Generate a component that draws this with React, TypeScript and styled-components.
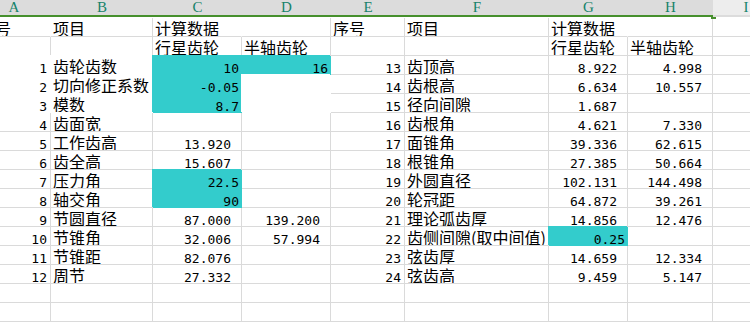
import React from "react";
import styled, { createGlobalStyle } from "styled-components";

const GlobalStyle = createGlobalStyle`
  html, body {
    margin: 0;
    padding: 0;
    background: #ffffff;
  }
  body {
    font-family: "Noto Sans CJK SC", sans-serif;
    color: #000000;
  }
`;

const GRID = "#dadada";
const TEAL = "#33cccc";
const COLS = [74, 102, 89, 89, 74, 144, 79, 85, 66];
const LETTERS = ["A", "B", "C", "D", "E", "F", "G", "H", "I"];

type Fill = "teal" | "white";

const fillColor = (f?: Fill) => (f === "teal" ? TEAL : "#ffffff");

const Viewport = styled.div`
  width: 750px;
  height: 322px;
  overflow: hidden;
  background: #ffffff;
`;

const Sheet = styled.div`
  display: grid;
  grid-template-columns: ${COLS.map((w) => w + "px").join(" ")};
  grid-auto-rows: auto;
  margin-left: -23px;
  width: max-content;
`;

const ColHead = styled.div<{ $active: boolean; $handle?: boolean }>`
  position: relative;
  height: 17px;
  box-sizing: border-box;
  margin-bottom: 1px;
  background: ${(p) => (p.$active ? "#dcdcdc" : "#ededed")};
  border-bottom: 2px solid ${(p) => (p.$active ? "#46902d" : "#dcdcdc")};
  font-family: "Liberation Serif", serif;
  font-size: 15px;
  line-height: 15px;
  color: #16836a;
  text-align: center;

  ${(p) =>
    p.$handle &&
    `
    &::after {
      content: "";
      position: absolute;
      right: -3px;
      bottom: -4px;
      width: 5px;
      height: 4px;
      background: #46902d;
    }
  `}
`;

const Cell = styled.div<{
  $fill?: Fill;
  $open?: boolean;
  $right?: boolean;
  $pr?: number;
}>`
  height: 19px;
  box-sizing: border-box;
  padding: 1px ${(p) => p.$pr ?? 2}px 0 2px;
  background: ${(p) => fillColor(p.$fill)};
  border-right: 1px solid
    ${(p) => (p.$fill ? fillColor(p.$fill) : p.$open ? "#ffffff" : GRID)};
  border-bottom: 1px solid ${(p) => (p.$fill ? fillColor(p.$fill) : GRID)};
  box-shadow: ${(p) =>
    p.$fill ? `-1px -1px 0 0 ${fillColor(p.$fill)}` : "none"};
  font-size: 16px;
  line-height: 18px;
  white-space: nowrap;
  overflow: hidden;
  text-align: ${(p) => (p.$right ? "right" : "left")};
`;

const Num = styled.span`
  font-family: "DejaVu Sans Mono", monospace;
  font-size: 13px;
  line-height: 1;
`;

type LeftRow = {
  n: number;
  name: string;
  c: string;
  d: string;
  cFill?: Fill;
  dFill?: Fill;
  abFill?: Fill;
};

type RightRow = {
  n: number;
  name: string;
  g: string;
  h: string;
  gFill?: Fill;
};

const left: LeftRow[] = [
  { n: 1, name: "齿轮齿数", c: "10", d: "16", cFill: "teal", dFill: "teal", abFill: "white" },
  { n: 2, name: "切向修正系数", c: "-0.05", d: "", cFill: "teal", dFill: "white", abFill: "white" },
  { n: 3, name: "模数", c: "8.7", d: "", cFill: "teal", dFill: "white", abFill: "white" },
  { n: 4, name: "齿面宽", c: "", d: "" },
  { n: 5, name: "工作齿高", c: "13.920", d: "" },
  { n: 6, name: "齿全高", c: "15.607", d: "" },
  { n: 7, name: "压力角", c: "22.5", d: "", cFill: "teal" },
  { n: 8, name: "轴交角", c: "90", d: "", cFill: "teal" },
  { n: 9, name: "节圆直径", c: "87.000", d: "139.200" },
  { n: 10, name: "节锥角", c: "32.006", d: "57.994" },
  { n: 11, name: "节锥距", c: "82.076", d: "" },
  { n: 12, name: "周节", c: "27.332", d: "" },
];

const right: RightRow[] = [
  { n: 13, name: "齿顶高", g: "8.922", h: "4.998" },
  { n: 14, name: "齿根高", g: "6.634", h: "10.557" },
  { n: 15, name: "径向间隙", g: "1.687", h: "" },
  { n: 16, name: "齿根角", g: "4.621", h: "7.330" },
  { n: 17, name: "面锥角", g: "39.336", h: "62.615" },
  { n: 18, name: "根锥角", g: "27.385", h: "50.664" },
  { n: 19, name: "外圆直径", g: "102.131", h: "144.498" },
  { n: 20, name: "轮冠距", g: "64.872", h: "39.261" },
  { n: 21, name: "理论弧齿厚", g: "14.856", h: "12.476" },
  { n: 22, name: "齿侧间隙(取中间值)", g: "0.25", h: "", gFill: "teal" },
  { n: 23, name: "弦齿厚", g: "14.659", h: "12.334" },
  { n: 24, name: "弦齿高", g: "9.459", h: "5.147" },
];

const ValueCell = ({ value, fill }: { value: string; fill?: Fill }) => (
  <Cell $fill={fill} $right $pr={fill === "teal" ? 2 : 10}>
    {value && <Num>{value}</Num>}
  </Cell>
);

const DataRow = ({ l, r }: { l: LeftRow; r: RightRow }) => (
  <>
    <Cell $fill={l.abFill} $right $pr={3}>
      <Num>{l.n}</Num>
    </Cell>
    <Cell $fill={l.abFill}>{l.name}</Cell>
    <ValueCell value={l.c} fill={l.cFill} />
    <ValueCell value={l.d} fill={l.dFill} />
    <Cell $right $pr={3}>
      <Num>{r.n}</Num>
    </Cell>
    <Cell>{r.name}</Cell>
    <ValueCell value={r.g} fill={r.gFill} />
    <ValueCell value={r.h} />
    <Cell />
  </>
);

const EmptyRow = () => (
  <>
    {COLS.map((_, i) => (
      <Cell key={i} />
    ))}
  </>
);

export default function App() {
  return (
    <>
      <GlobalStyle />
      <Viewport>
        <Sheet>
          {LETTERS.map((l, i) => (
            <ColHead key={l} $active={i < 8} $handle={i === 7}>
              {l}
            </ColHead>
          ))}

          <Cell $open>序号</Cell>
          <Cell>项目</Cell>
          <Cell $open>计算数据</Cell>
          <Cell />
          <Cell>序号</Cell>
          <Cell>项目</Cell>
          <Cell $open>计算数据</Cell>
          <Cell />
          <Cell />

          <Cell />
          <Cell />
          <Cell>行星齿轮</Cell>
          <Cell>半轴齿轮</Cell>
          <Cell />
          <Cell />
          <Cell>行星齿轮</Cell>
          <Cell>半轴齿轮</Cell>
          <Cell />

          {left.map((l, i) => (
            <DataRow key={l.n} l={l} r={right[i]} />
          ))}

          <EmptyRow />
          <EmptyRow />
        </Sheet>
      </Viewport>
    </>
  );
}
